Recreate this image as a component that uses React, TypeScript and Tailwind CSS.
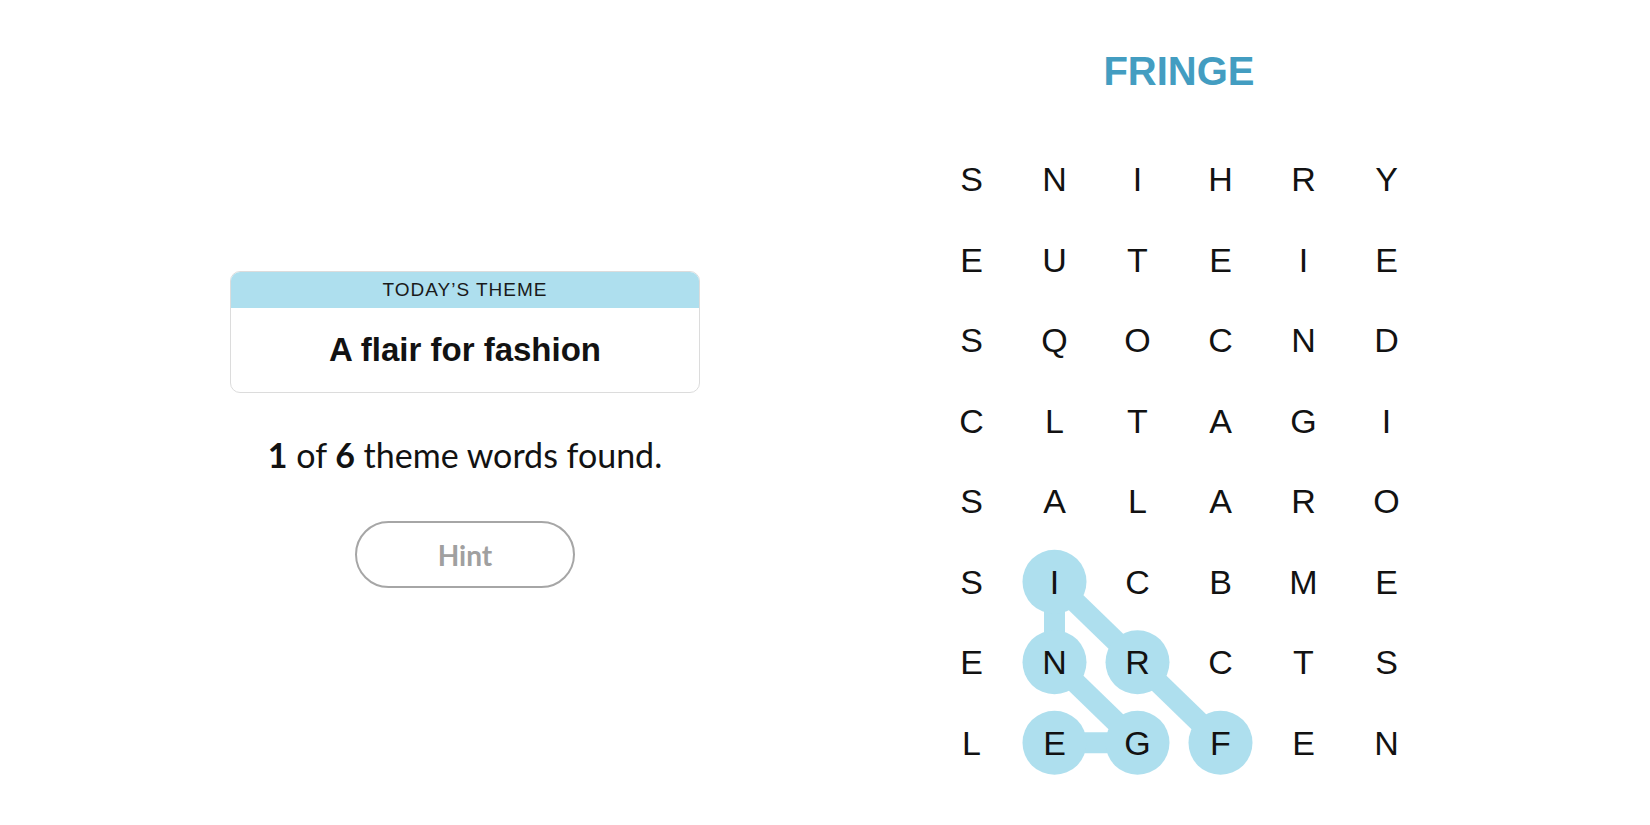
import React from "react";

const GRID = [
  "SNIHRY",
  "EUTEIE",
  "SQOCND",
  "CLTAGI",
  "SALARO",
  "SICBME",
  "ENRCTS",
  "LEGFEN",
];

const CELL_W = 83;
const CELL_H = 80.5;

// selected path cells [row, col]
const selected: [number, number][] = [
  [5, 1],
  [6, 1],
  [7, 1],
  [7, 2],
  [6, 2],
  [7, 3],
];

const links: [[number, number], [number, number]][] = [
  [[5, 1], [6, 1]],
  [[6, 1], [7, 2]],
  [[7, 1], [7, 2]],
  [[5, 1], [6, 2]],
  [[6, 2], [7, 3]],
];

const cx = (c: number) => c * CELL_W + CELL_W / 2;
const cy = (r: number) => r * CELL_H + CELL_H / 2;

const ThemeCard = () => (
  <div className="w-[470px] rounded-[10px] border border-[#dcdcdc] overflow-hidden bg-white">
    <div className="h-[36px] bg-[#aedfee] flex items-center justify-center text-[19px] tracking-[1px] text-[#1a1a1a] font-['Liberation_Sans',sans-serif]">
      TODAY’S THEME
    </div>
    <div className="h-[84px] flex items-center justify-center text-[33px] font-bold text-[#121212] font-['Liberation_Sans',sans-serif]">
      A flair for fashion
    </div>
  </div>
);

const Board = () => (
  <div className="relative w-[498px]">
    <svg className="absolute inset-0" width={CELL_W * 6} height={CELL_H * 8}>
      {links.map(([a, b], i) => (
        <line
          key={i}
          x1={cx(a[1])}
          y1={cy(a[0])}
          x2={cx(b[1])}
          y2={cy(b[0])}
          stroke="#aedfee"
          strokeWidth={21}
        />
      ))}
      {selected.map(([r, c]) => (
        <circle key={`${r}-${c}`} cx={cx(c)} cy={cy(r)} r={32} fill="#aedfee" />
      ))}
    </svg>
    <div className="relative grid grid-cols-[repeat(6,83px)] auto-rows-[80.5px]">
      {GRID.flatMap((row, r) =>
        row.split("").map((ch, c) => (
          <div
            key={`${r}-${c}`}
            className="flex items-center justify-center text-[34px] leading-none text-[#121212] font-['Liberation_Sans',sans-serif]"
          >
            {ch}
          </div>
        ))
      )}
    </div>
  </div>
);

export default function App() {
  return (
    <div className="w-full h-[825px] bg-white flex">
      {/* left panel */}
      <div className="w-[930px] flex flex-col items-center pt-[271px]">
        <ThemeCard />
        <p className="mt-[42px] text-[34px] leading-[40px] text-[#121212] font-['Lato',sans-serif]">
          <span className="font-bold">1</span> of <span className="font-bold">6</span> theme words found.
        </p>
        <button className="mt-[46px] w-[220px] h-[67px] rounded-full border-2 border-[#a6a6a6] text-[28px] font-bold text-[#a0a0a0] font-['Lato',sans-serif]">
          Hint
        </button>
      </div>

      {/* right panel */}
      <div className="w-[498px] flex flex-col pt-[51px]">
        <h1 className="h-[40px] text-center text-[40px] leading-[40px] font-bold text-[#439dc1] font-['Liberation_Sans',sans-serif]">
          FRINGE
        </h1>
        <div className="mt-[48px]">
          <Board />
        </div>
      </div>
    </div>
  );
}
